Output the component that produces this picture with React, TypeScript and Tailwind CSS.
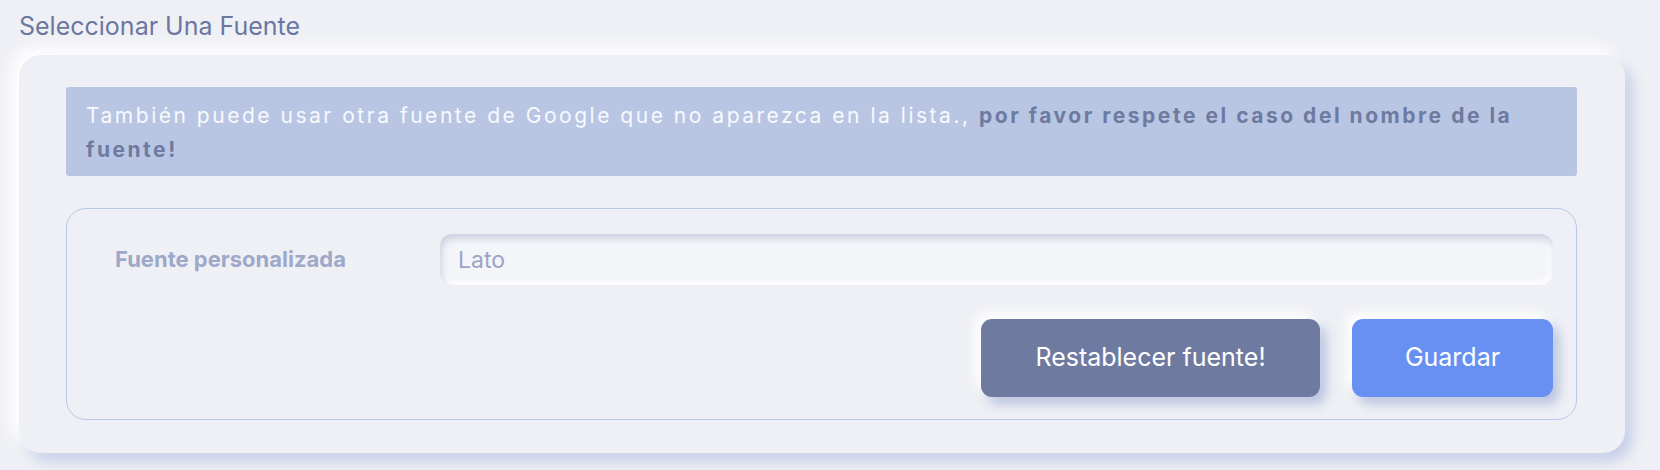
import React from "react";

export default function App() {
  return (
    <div className="w-[1660px] h-[470px] overflow-hidden bg-[#eff0f5] pl-[19px] pt-[10px] font-['Inter','Roboto',sans-serif]">
      <h2 className="text-[25px] leading-[32px] font-normal text-[#6b779f]">Seleccionar Una Fuente</h2>
      <div className="mt-[13px] w-[1606px] h-[398px] rounded-[22px] bg-[#eff0f5] pt-[32px] pl-[47px] pr-[48px] shadow-[-8px_-8px_16px_#ffffff,7px_8px_14px_#c3cde7]">
        <div className="h-[89px] rounded-[3px] bg-[#b8c6e4] px-[20px] pt-[12px] text-[21px] leading-[34px] tracking-[0.12em] text-[#f8f9fc]">
          <p>
            También puede usar otra fuente de Google que no aparezca en la lista.,{" "}
            <strong className="font-bold text-[#6e7aa0]">por favor respete el caso del nombre de la fuente!</strong>
          </p>
        </div>
        <div className="mt-[32px] h-[212px] rounded-[20px] border border-[#b9c7ea] pl-[48px] pr-[23px] pt-[25px]">
          <div className="flex items-center">
            <label className="w-[325px] text-[22px] font-bold text-[#9ea8c8]">Fuente personalizada</label>
            <input
              readOnly
              defaultValue="Lato"
              className="flex-1 h-[51px] rounded-[12px] bg-[#f4f5f9] pl-[18px] text-[23px] text-[#9aa4c6] outline-none shadow-[inset_2px_5px_7px_#cdd2e2,inset_-3px_-3px_6px_#ffffff]"
            />
          </div>
          <div className="mt-[34px] flex justify-end gap-[32px]">
            <button className="w-[339px] h-[78px] rounded-[11px] bg-[#6f7aa0] text-[25px] text-white shadow-[-6px_-6px_12px_#ffffff,6px_7px_12px_#b6c1de]">
              Restablecer fuente!
            </button>
            <button className="w-[201px] h-[78px] rounded-[11px] bg-[#6890f2] text-[25px] text-white shadow-[-6px_-6px_12px_#ffffff,6px_7px_12px_#b6c1de]">
              Guardar
            </button>
          </div>
        </div>
      </div>
    </div>
  );
}
